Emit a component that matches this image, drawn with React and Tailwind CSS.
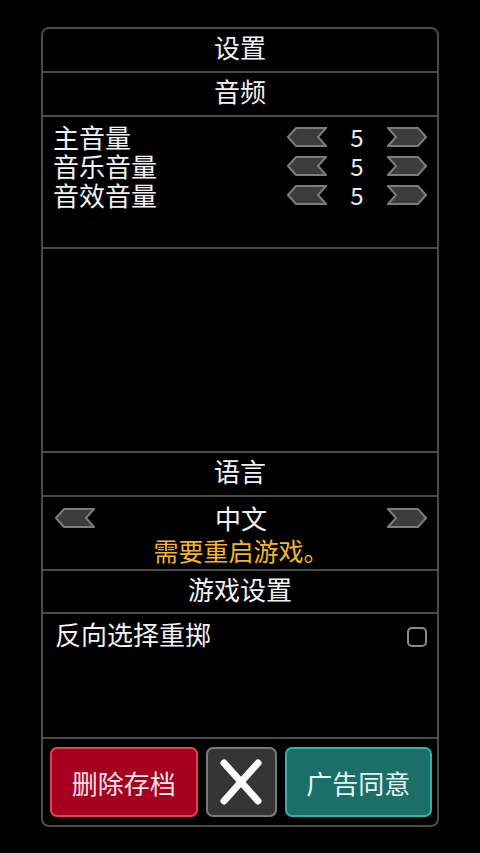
import React from 'react';

const font = { fontFamily: '"Noto Sans CJK SC", "Noto Sans", sans-serif' };

const Arrow = ({ dir = 'left' }) => (
  <svg width="40" height="20" viewBox="0 0 40 20" className="shrink-0">
    {dir === 'left' ? (
      <polygon points="1,10 9,1 39,1 31,10 39,19 9,19" fill="#3c3c3c" stroke="#7c7c7c" strokeWidth="2" />
    ) : (
      <polygon points="39,10 31,1 1,1 9,10 1,19 31,19" fill="#3c3c3c" stroke="#7c7c7c" strokeWidth="2" />
    )}
  </svg>
);

const Header = ({ children, className = 'h-[44px]' }) => (
  <div className={`${className} border-b-2 border-[#4a4a4a] flex items-center justify-center pb-[6px] text-[26px] leading-none text-[#f2f2f2]`}>
    {children}
  </div>
);

export default function App() {
  const volumes = [
    { label: '主音量', value: 5 },
    { label: '音乐音量', value: 5 },
    { label: '音效音量', value: 5 },
  ];

  return (
    <div className="w-[480px] h-[853px] bg-black overflow-hidden pt-[27px]" style={font}>
      <div className="mx-auto w-[398px] border-2 border-[#4a4a4a] rounded-[8px]">
        {/* Title */}
        <Header>设置</Header>

        {/* Audio */}
        <Header>音频</Header>
        <div className="h-[132px] border-b-2 border-[#4a4a4a] pt-[5px] pl-[10px] pr-[10px] flex">
          <div className="flex-1 text-[26px] leading-[29px] text-[#f2f2f2]">
            {volumes.map((v, i) => (
              <React.Fragment key={v.label}>
                {i > 0 && <br />}
                {v.label}
              </React.Fragment>
            ))}
          </div>
          <div className="relative flex flex-col">
            {volumes.map((v) => (
              <div key={v.label} className="h-[29px] flex items-center">
                <Arrow dir="left" />
                <span className="w-[60px]" />
                <Arrow dir="right" />
              </div>
            ))}
            <div className="absolute left-[40px] top-0 w-[60px] text-center text-[24px] leading-[29px] text-[#e8e8e8]">
              {volumes.map((v, i) => (
                <React.Fragment key={v.label}>
                  {i > 0 && <br />}
                  {v.value}
                </React.Fragment>
              ))}
            </div>
          </div>
        </div>

        {/* Empty space */}
        <div className="h-[204px] border-b-2 border-[#4a4a4a]" />

        {/* Language */}
        <Header>语言</Header>
        <div className="h-[74px] border-b-2 border-[#4a4a4a] flex items-start pt-[11px] pl-[12px] pr-[10px]">
          <Arrow dir="left" />
          <p className="flex-1 text-center -mt-[4px] leading-[28px]">
            <span className="text-[26px] text-[#f2f2f2]">中文</span>
            <br />
            <span className="text-[25px] text-[#f4b52a]">需要重启游戏。</span>
          </p>
          <Arrow dir="right" />
        </div>

        {/* Game settings */}
        <Header className="h-[43px]">游戏设置</Header>
        <div className="h-[125px] border-b-2 border-[#4a4a4a] pl-[12px] pr-[10px] pt-[7px] flex items-start">
          <span className="flex-1 text-[26px] leading-none text-[#f2f2f2]">反向选择重掷</span>
          <div className="mt-[6px] w-[20px] h-[20px] rounded-[5px] border-2 border-[#8a8a8a]" />
        </div>

        {/* Buttons */}
        <div className="h-[86px] flex items-center gap-[8px] pl-[7px] pr-[5px]">
          <button className="flex-1 h-[70px] rounded-[7px] border-2 border-[#e8404f] bg-[#a5001f] text-[26px] text-[#fbe4e6] flex items-center justify-center">
            删除存档
          </button>
          <button className="w-[71px] h-[70px] rounded-[7px] border-2 border-[#7a7a7a] bg-[#353535] flex items-center justify-center">
            <svg width="46" height="50" viewBox="0 0 46 50">
              <line x1="6" y1="6" x2="40" y2="44" stroke="#ffffff" strokeWidth="7" strokeLinecap="round" />
              <line x1="40" y1="6" x2="6" y2="44" stroke="#ffffff" strokeWidth="7" strokeLinecap="round" />
            </svg>
          </button>
          <button className="flex-1 h-[70px] rounded-[7px] border-2 border-[#2db3a8] bg-[#1b6f68] text-[26px] text-[#e4f4f2] flex items-center justify-center">
            广告同意
          </button>
        </div>
      </div>
    </div>
  );
}
